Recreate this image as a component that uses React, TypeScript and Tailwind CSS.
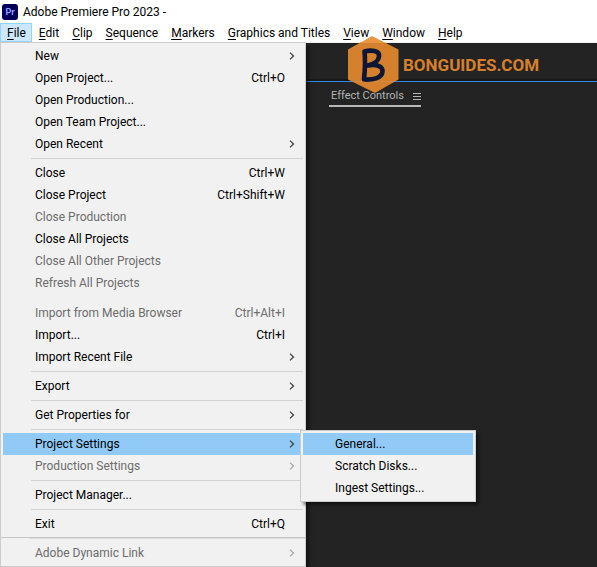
import React from 'react';

interface MenuEntry {
  label: string;
  shortcut?: string;
  submenu?: boolean;
  disabled?: boolean;
  active?: boolean;
}

const menuBar = ['File', 'Edit', 'Clip', 'Sequence', 'Markers', 'Graphics and Titles', 'View', 'Window', 'Help'];

// Each inner list is one group, groups are split by a separator
const fileMenu: MenuEntry[][] = [
  [
    { label: 'New', submenu: true },
    { label: 'Open Project...', shortcut: 'Ctrl+O' },
    { label: 'Open Production...' },
    { label: 'Open Team Project...' },
    { label: 'Open Recent', submenu: true },
  ],
  [
    { label: 'Close', shortcut: 'Ctrl+W' },
    { label: 'Close Project', shortcut: 'Ctrl+Shift+W' },
    { label: 'Close Production', disabled: true },
    { label: 'Close All Projects' },
    { label: 'Close All Other Projects', disabled: true },
    { label: 'Refresh All Projects', disabled: true },
  ],
  [
    { label: 'Import from Media Browser', shortcut: 'Ctrl+Alt+I', disabled: true },
    { label: 'Import...', shortcut: 'Ctrl+I' },
    { label: 'Import Recent File', submenu: true },
  ],
  [{ label: 'Export', submenu: true }],
  [{ label: 'Get Properties for', submenu: true }],
  [
    { label: 'Project Settings', submenu: true, active: true },
    { label: 'Production Settings', submenu: true, disabled: true },
  ],
  [{ label: 'Project Manager...' }],
  [{ label: 'Exit', shortcut: 'Ctrl+Q' }],
  [{ label: 'Adobe Dynamic Link', submenu: true, disabled: true }],
];

const projectSettings: MenuEntry[] = [
  { label: 'General...', active: true },
  { label: 'Scratch Disks...' },
  { label: 'Ingest Settings...' },
];

const Chevron: React.FC = () => (
  <svg width="6" height="8" viewBox="0 0 6 8" fill="none" stroke="currentColor" strokeWidth="1.3">
    <path d="M1 .6 4.500 4 1 7.400" />
  </svg>
);

const MenuItem: React.FC<{ item: MenuEntry }> = ({ item }) => (
  <button
    role="menuitem"
    disabled={item.disabled}
    className={`flex w-full h-[22px] items-center pl-8 text-left whitespace-nowrap ${item.active ? 'bg-[#91c9f7]' : ''} ${item.disabled ? 'text-[#6d6d6d]' : 'text-black'}`}
  >
    <span className="flex-1">{item.label}</span>
    {item.shortcut && <span>{item.shortcut}</span>}
    <span className={`w-[18px] pl-1 ${item.disabled ? 'text-[#a8a8a8]' : 'text-[#404040]'}`}>
      {item.submenu && <Chevron />}
    </span>
  </button>
);

const Separator: React.FC<{ index: number }> = ({ index }) => {
  // Group 2 only leaves a gap, the last one runs the full width of the menu
  if (index === 2) return <div className="h-2" />;
  if (index === fileMenu.length - 1) {
    return (
      <div className="h-[7px] pt-[2px] -mx-[2px]">
        <div className="h-px bg-[#c6c6c6]" />
        <div className="ml-7 h-px bg-[#dedede]" />
      </div>
    );
  }
  return <div className="h-px my-[3px] ml-7 bg-[#d2d2d2]" />;
};

const FileMenu: React.FC = () => (
  <div role="menu" className="absolute left-0 top-full z-10 w-[306px] bg-[#f1f1f1] border border-[#cccccc] p-[2px] shadow-[3px_3px_3px_rgba(0,0,0,0.45)]">
    {fileMenu.map((group, i) => (
      <React.Fragment key={i}>
        {i > 0 && <Separator index={i} />}
        {group.map((item) => (
          <div key={item.label} className="relative">
            <MenuItem item={item} />
            {item.active && (
              <div role="menu" className="absolute left-[297px] -top-[3px] w-44 bg-[#f1f1f1] border border-[#cccccc] p-[2px] shadow-[3px_3px_3px_rgba(0,0,0,0.45)]">
                {projectSettings.map((sub) => <MenuItem key={sub.label} item={sub} />)}
              </div>
            )}
          </div>
        ))}
      </React.Fragment>
    ))}
  </div>
);

const Watermark: React.FC = () => (
  <div className="absolute left-[348px] top-9 flex items-center gap-1 opacity-90">
    <svg width="51" height="58" viewBox="0 0 51 58">
      <path d="M24 0 50.500 13.500V43.500L27 57 0 43.500V13.500Z" fill="#e98b2f" />
      <path
        d="M16.500 15.500C22 14 32 14 31 20.500 30.500 25 26 28 20 29.500 28 28 35 30 34.500 35.500 34 42.500 24 44 16 43.500 17 34 17.500 25 16.500 15.500Z"
        fill="none"
        stroke="#0b1638"
        strokeWidth="4.600"
        strokeLinejoin="round"
      />
    </svg>
    <span className="font-['Roboto',sans-serif] text-[17px] font-bold leading-none text-[#e98b2f]">BONGUIDES.COM</span>
  </div>
);

const App: React.FC = () => {
  return (
    <div className="relative flex h-screen flex-col overflow-hidden bg-[#232323] font-['Roboto',sans-serif] text-[12px] leading-4 text-black">
      {/* Title bar */}
      <header className="flex h-[23px] shrink-0 items-center gap-[5px] bg-white pl-[2px]">
        <div className="flex size-4 items-center justify-center rounded-[3px] bg-[#00005b] text-[9px] font-bold text-[#9999ff]">Pr</div>
        <h1>Adobe Premiere Pro 2023 -</h1>
      </header>

      {/* Menu bar */}
      <nav className="relative flex h-[19px] shrink-0 bg-white">
        {menuBar.map((name) => (
          <button
            key={name}
            className={`flex items-center border pl-[6px] pr-[5px] whitespace-nowrap ${name === 'File' ? 'bg-[#cce8ff] border-[#99d1ff]' : 'border-transparent'}`}
          >
            <span><u className="underline-offset-2">{name[0]}</u>{name.slice(1)}</span>
          </button>
        ))}
        <FileMenu />
      </nav>

      {/* Workspace */}
      <main className="flex-1 border-t border-[#f0f0f0]">
        <div className="h-[39px] border-b border-[#2d8ceb] shadow-[inset_0_-2px_0_#181818]" />
        <section className="pl-[329px] pt-[5px]">
          <div className="flex h-5 w-[92px] items-center justify-between border-b-2 border-[#b8b8b8] pl-[2px] text-[11px] text-[#b4b4b4]">
            <h2 className="whitespace-nowrap">Effect Controls</h2>
            <button aria-label="Panel menu">
              <svg width="8" height="7" viewBox="0 0 8 7" fill="currentColor">
                <path d="M0 0h8v1H0zM0 3h8v1H0zM0 6h8v1H0z" />
              </svg>
            </button>
          </div>
        </section>
      </main>

      <Watermark />
    </div>
  );
};

export default App;
